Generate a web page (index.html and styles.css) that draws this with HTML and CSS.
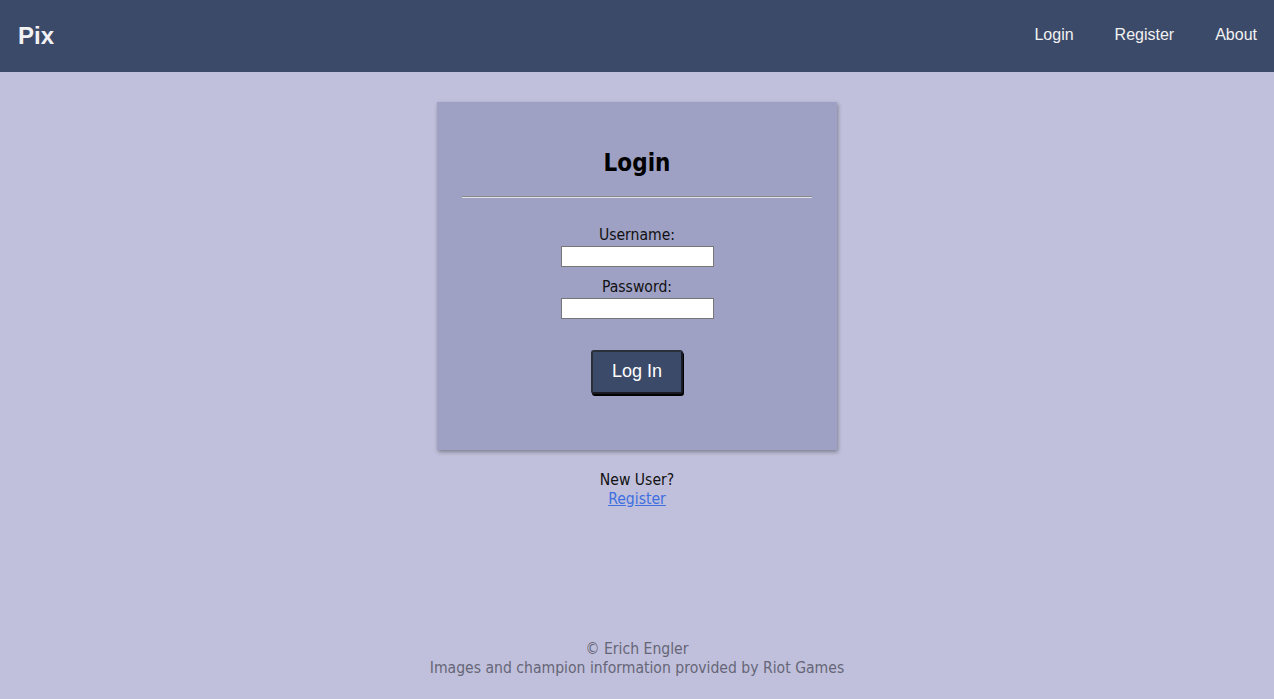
FILE: index.html
```html
<!DOCTYPE html>
<html>
<head>
<meta charset="utf-8">
<link rel="stylesheet" href="styles.css">
</head>
<body>
<header class="topbar">
  <div class="brand">Pix</div>
  <nav class="nav">
    <a href="#">Login</a>
    <a href="#">Register</a>
    <a href="#">About</a>
  </nav>
</header>
<main class="main">
  <section class="card">
    <h1 class="card-title">Login</h1>
    <hr class="rule">
    <form class="form">
      <label class="label">Username:</label>
      <input class="field" type="text">
      <label class="label">Password:</label>
      <input class="field" type="password">
      <button class="btn" type="button">Log In</button>
    </form>
  </section>
  <div class="newuser">
    <div>New User?</div>
    <a href="#" class="link">Register</a>
  </div>
</main>
<footer class="footer">
  <div>© Erich Engler</div>
  <div>Images and champion information provided by Riot Games</div>
</footer>
</body>
</html>
```

FILE: styles.css
```css
html, body {
  margin: 0;
  padding: 0;
  height: 100%;
}
body {
  background: #c0c0dc;
  font-family: "DejaVu Sans Condensed", "DejaVu Sans", sans-serif;
  font-size: 15.6px;
  display: flex;
  flex-direction: column;
  min-height: 699px;
}
.topbar {
  height: 72px;
  background: #3c4a69;
  display: flex;
  align-items: center;
  justify-content: space-between;
  padding: 0 17px 0 18px;
  box-sizing: border-box;
}
.brand {
  font-family: "Liberation Sans", Arial, sans-serif;
  font-weight: bold;
  font-size: 24px;
  color: #f2f2f2;
}
.nav {
  display: flex;
  gap: 41px;
  margin-top: -3px;
}
.nav a {
  font-family: "Liberation Sans", Arial, sans-serif;
  font-size: 16px;
  color: #f2f2f2;
  text-decoration: none;
}
.main {
  flex: 1;
  display: flex;
  flex-direction: column;
  align-items: center;
  padding-top: 30px;
}
.card {
  width: 400px;
  height: 348px;
  box-sizing: border-box;
  background: #9ea0c4;
  box-shadow: 1px 2px 4px rgba(0,0,0,0.35);
  padding: 0 25px;
  display: flex;
  flex-direction: column;
  align-items: center;
}
.card-title {
  margin: 46px 0 0;
  font-size: 24px;
  font-weight: bold;
  line-height: 30px;
  color: #000;
}
.rule {
  width: 100%;
  margin: 18px 0 0;
  border: 0;
  border-top: 1px solid #8a8a8a;
  border-bottom: 1px solid #e0e0e8;
  height: 0;
}
.form {
  display: flex;
  flex-direction: column;
  align-items: center;
  margin-top: 27px;
}
.label {
  line-height: 21px;
  color: #111;
}
.field {
  width: 153px;
  height: 21px;
  box-sizing: border-box;
  border: 1px solid #767676;
  background: #fff;
  margin: 0 0 10px;
  padding: 0;
}
.btn {
  margin-top: 21px;
  width: 92px;
  height: 44px;
  padding: 0 0 2px;
  background: #3c4a69;
  color: #fff;
  font-family: "Liberation Sans", Arial, sans-serif;
  font-size: 18px;
  border: 2px solid #1a1a22;
  border-top-color: #2a2f3a;
  border-left-color: #2a2f3a;
  border-radius: 3px;
  box-shadow: 1px 2px 0 #000;
}
.newuser {
  margin-top: 21px;
  text-align: center;
  line-height: 19px;
  color: #111;
}
.link {
  color: #3d6fe0;
  text-decoration: underline;
}
.footer {
  text-align: center;
  color: #666677;
  line-height: 19px;
  padding-bottom: 21px;
}
```
